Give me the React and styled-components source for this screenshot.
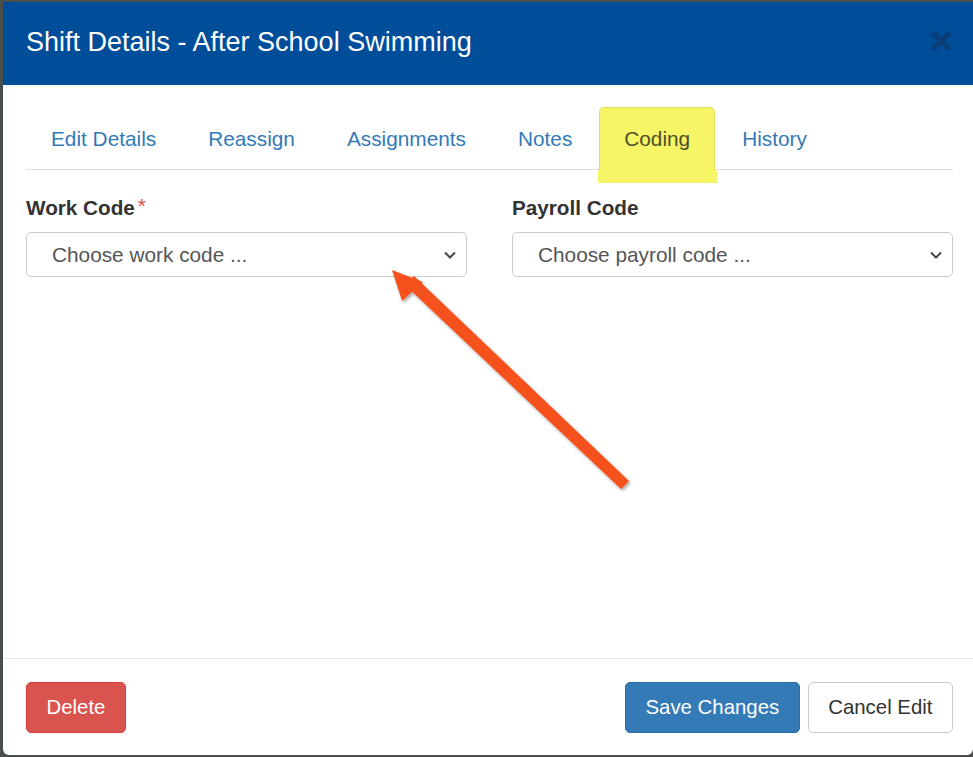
import React from "react";
import styled, { createGlobalStyle } from "styled-components";

const Global = createGlobalStyle`
  html, body { margin: 0; padding: 0; }
  body {
    background: #4b4f4c;
    font-family: "Liberation Sans", Arial, sans-serif;
    overflow: hidden;
  }
  #root { width: 973px; height: 757px; }
`;

const Modal = styled.div`
  position: relative;
  margin: 2px 0 0 3px;
  width: 970px;
  height: 753px;
  background: #fff;
  border-radius: 0 0 6px 6px;
  overflow: hidden;
  display: flex;
  flex-direction: column;
  box-sizing: border-box;
`;

const Header = styled.div`
  height: 83px;
  background: #004d99;
  display: flex;
  align-items: center;
  justify-content: space-between;
  padding: 0 20px 0 23px;
  flex-shrink: 0;
`;

const Title = styled.h4`
  margin: 0;
  color: #fff;
  font-size: 27px;
  font-weight: normal;
  line-height: 1;
  padding-bottom: 2px;
`;

const Close = styled.button`
  background: none;
  border: 0;
  padding: 0;
  width: 24px;
  height: 24px;
  margin-bottom: 6px;
  cursor: pointer;
  display: flex;
`;

const Body = styled.div`
  flex: 1;
  padding: 22px 20px 0 23px;
`;

const TabList = styled.ul`
  list-style: none;
  margin: 0;
  padding: 0;
  display: flex;
  border-bottom: 1px solid #ddd;
  height: 62px;
`;

const Tab = styled.li`
  position: relative;
  margin-right: 2px;
  padding: 0 24px;
  display: flex;
  align-items: center;
  font-size: 20.8px;
  color: ${(p) => (p.$active ? "#4f4f2a" : "#337ab7")};
  background: ${(p) => (p.$active ? "#f5f565" : "transparent")};
  border: 1px solid ${(p) => (p.$active ? "#e0e05a" : "transparent")};
  border-bottom: 0;
  border-radius: 5px 5px 0 0;
  margin-bottom: -1px;
  cursor: pointer;
  ${(p) =>
    p.$active &&
    `
    &::after {
      content: "";
      position: absolute;
      left: -2px;
      right: -3px;
      top: 100%;
      height: 13px;
      background: #f5f565;
    }
  `}
`;

const Fields = styled.div`
  display: grid;
  grid-template-columns: 441px 441px;
  column-gap: 45px;
  padding-top: 23px;
`;

const Field = styled.div`
  display: flex;
  flex-direction: column;
`;

const Label = styled.label`
  font-size: 20.7px;
  font-weight: bold;
  color: #333;
  line-height: 30px;
  margin-bottom: 9px;
`;

const Req = styled.span`
  color: #d9534f;
  font-weight: normal;
  margin-left: 3px;
  font-size: 21px;
  position: relative;
  top: -2px;
`;

const Select = styled.div`
  height: 45px;
  box-sizing: border-box;
  border: 1px solid #ccc;
  border-radius: 5px;
  padding: 0 9px 0 25px;
  display: flex;
  align-items: center;
  justify-content: space-between;
  font-size: 20.8px;
  color: #555;
  background: #fff;
`;

const Footer = styled.div`
  border-top: 1px solid #e5e5e5;
  height: 97px;
  box-sizing: border-box;
  padding: 23px 20px 0 23px;
  display: flex;
  align-items: flex-start;
  gap: 8px;
  flex-shrink: 0;
`;

const Button = styled.button`
  height: 51px;
  box-sizing: border-box;
  padding: 0 19.5px;
  font-family: inherit;
  font-size: 20.4px;
  border-radius: 5px;
  border: 1px solid ${(p) => p.$border};
  background: ${(p) => p.$bg};
  color: ${(p) => p.$color};
  cursor: pointer;
  ${(p) => p.$push && "margin-left: auto;"}
`;

const Arrow = styled.svg`
  position: absolute;
  left: 0;
  top: 0;
  pointer-events: none;
`;

const Chevron = () => (
  <svg width="14" height="10" viewBox="0 0 14 10">
    <path d="M2 2.5 L7 7.5 L12 2.5" fill="none" stroke="#444" strokeWidth="2" />
  </svg>
);

export default function App() {
  const tabs = ["Edit Details", "Reassign", "Assignments", "Notes", "Coding", "History"];
  return (
    <>
      <Global />
      <Modal>
        <Header>
          <Title>Shift Details - After School Swimming</Title>
          <Close aria-label="Close">
            <svg width="24" height="24" viewBox="0 0 24 24">
              <path d="M5 5 L19 19 M19 5 L5 19" stroke="#0a3f7a" strokeWidth="5.5" strokeLinecap="round" />
            </svg>
          </Close>
        </Header>
        <Body>
          <TabList>
            {tabs.map((t) => (
              <Tab key={t} $active={t === "Coding"}>
                {t}
              </Tab>
            ))}
          </TabList>
          <Fields>
            <Field>
              <Label>
                Work Code<Req>*</Req>
              </Label>
              <Select>
                <span>Choose work code ...</span>
                <Chevron />
              </Select>
            </Field>
            <Field>
              <Label>Payroll Code</Label>
              <Select>
                <span>Choose payroll code ...</span>
                <Chevron />
              </Select>
            </Field>
          </Fields>
        </Body>
        <Footer>
          <Button $bg="#d9534f" $border="#d43f3a" $color="#fff">Delete</Button>
          <Button $push $bg="#337ab7" $border="#2e6da4" $color="#fff">Save Changes</Button>
          <Button $bg="#fff" $border="#ccc" $color="#333">Cancel Edit</Button>
        </Footer>
        <Arrow width="970" height="753" viewBox="3 2 970 753">
          <defs>
            <filter id="sh" x="-20%" y="-20%" width="140%" height="140%">
              <feDropShadow dx="1.5" dy="2" stdDeviation="1.5" floodColor="#000" floodOpacity="0.35" />
            </filter>
          </defs>
          <g filter="url(#sh)" fill="#f4511e" stroke="none">
            <polygon points="392,270 423,282 402,301" />
            <polygon points="405,285 414,276 629,481 621,489" />
          </g>
        </Arrow>
      </Modal>
    </>
  );
}
